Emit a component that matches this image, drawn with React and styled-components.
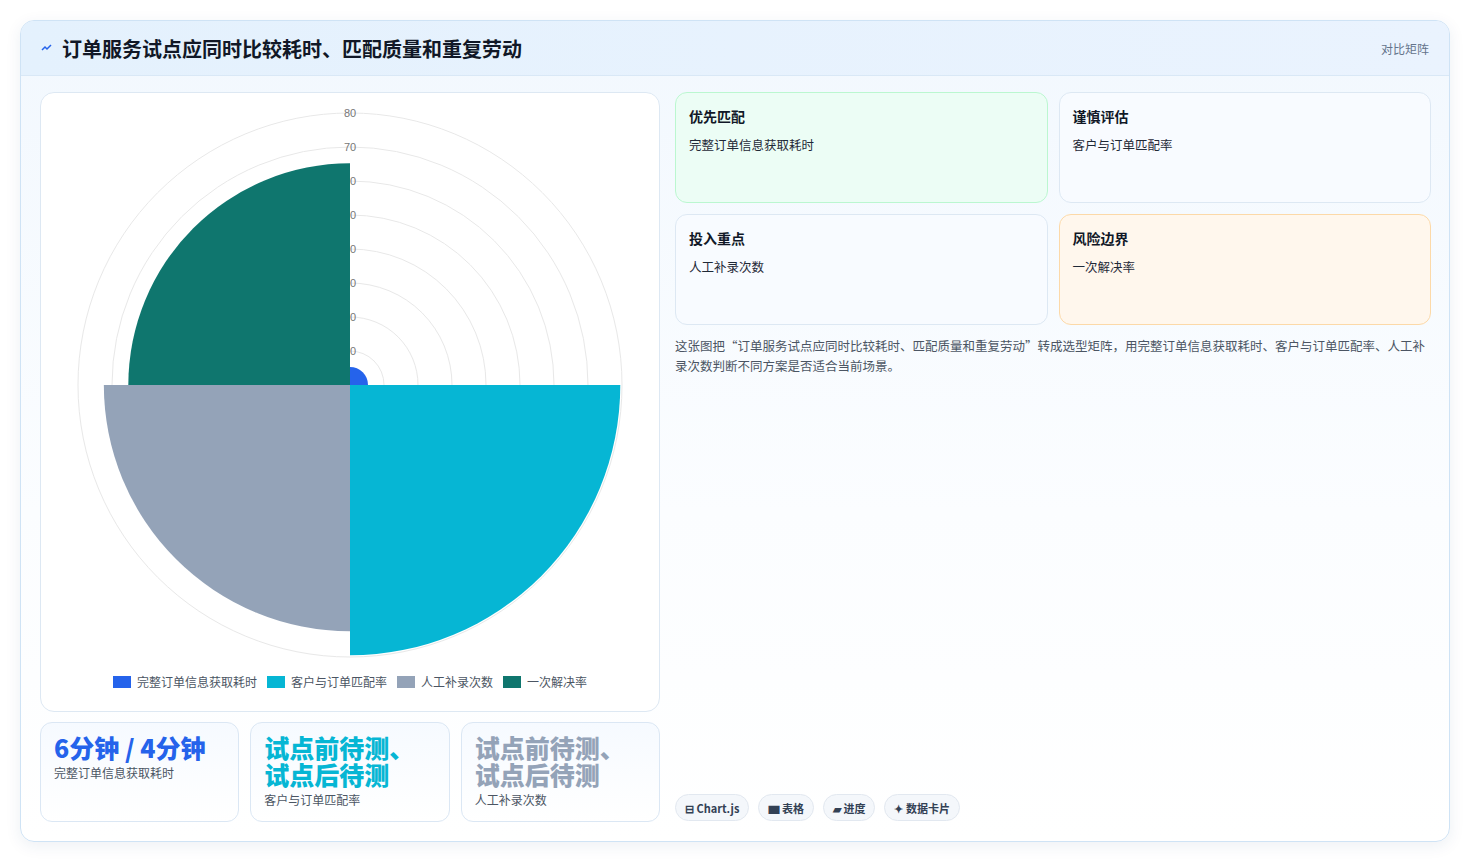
import React from "react";
import styled, { createGlobalStyle } from "styled-components";

const G = createGlobalStyle`
  body{margin:0;background:#fff;font-family:"Noto Sans CJK SC","Noto Sans",sans-serif;}
`;
const Page = styled.div`padding:20px 21px 22px 20px;height:862px;box-sizing:border-box;`;
const Frame = styled.div`
  height:820px;border:1px solid #cfe3f5;border-radius:14px;overflow:hidden;
  background:linear-gradient(180deg,#f2f8fe 0%,#fbfdff 60%,#fff 100%);
  box-shadow:0 4px 16px rgba(30,60,120,.08);display:flex;flex-direction:column;
`;
const Header = styled.div`
  height:55px;flex:none;box-sizing:border-box;display:flex;align-items:center;justify-content:space-between;
  padding:0 20px 0 20px;background:linear-gradient(90deg,#e4f1fd,#eaf3fe);border-bottom:1px solid #d9e8f6;
`;
const Title = styled.h1`margin:0;font-size:20px;font-weight:700;color:#111827;display:flex;align-items:center;gap:9px;`;
const Tag = styled.span`font-size:12px;color:#64748b;`;
const Body = styled.div`flex:1;display:grid;grid-template-columns:620px 1fr;gap:15px;padding:16px 18px 18px 19px;`;
const Left = styled.div`display:flex;flex-direction:column;gap:10px;`;
const ChartCard = styled.div`
  height:620px;box-sizing:border-box;border:1px solid #dde8f3;border-radius:14px;background:#fff;
  display:flex;flex-direction:column;align-items:center;
`;
const Legend = styled.div`display:flex;gap:10px;font-size:12px;color:#4b5563;margin-top:0;`;
const LItem = styled.span`display:flex;align-items:center;gap:6px;`;
const Sw = styled.i`width:18px;height:12px;background:${p=>p.c};display:inline-block;`;
const Stats = styled.div`display:grid;grid-template-columns:repeat(3,1fr);gap:11px;`;
const Stat = styled.div`
  height:100px;box-sizing:border-box;border:1px solid #dbe7f4;border-radius:12px;padding:11px 13px;
  background:linear-gradient(180deg,#f6faff,#fff);
`;
const Big = styled.div`font-size:25px;line-height:27px;font-weight:800;color:${p=>p.c};`;
const Small = styled.div`font-size:12px;color:#4b5563;margin-top:3px;`;
const Right = styled.div`display:flex;flex-direction:column;`;
const Grid = styled.div`display:grid;grid-template-columns:1fr 1fr;gap:11px 11px;`;
const Quad = styled.div`
  height:111px;box-sizing:border-box;border-radius:12px;padding:13px 13px;
  border:1px solid ${p=>p.b};background:${p=>p.bg};
`;
const QT = styled.div`font-size:14px;font-weight:700;color:#111827;`;
const QS = styled.div`font-size:12.5px;color:#1f2937;margin-top:9px;`;
const Desc = styled.p`margin:11px 0 0;font-size:12.5px;line-height:20px;color:#4b5563;`;
const Chips = styled.div`margin-top:auto;display:flex;gap:9px;margin-bottom:2px;`;
const Chip = styled.span`
  height:27px;box-sizing:border-box;padding:0 9px;border:1px solid #e2e8f0;border-radius:14px;background:#f4f7fb;
  font-size:11px;font-weight:700;color:#334155;display:flex;align-items:center;gap:3px;
`;

const cx=309, cy=292, k=3.4;
function arc(r,a0,a1){
  const p=(a)=>[cx+r*Math.cos(a),cy+r*Math.sin(a)];
  const [x0,y0]=p(a0),[x1,y1]=p(a1);
  return `M${cx} ${cy}L${x0} ${y0}A${r} ${r} 0 0 1 ${x1} ${y1}Z`;
}
const H=Math.PI/2;
function Chart(){
  return (
    <svg width="618" height="580" viewBox="0 0 618 580">
      {[1,2,3,4,5,6,7,8].map(i=><circle key={i} cx={cx} cy={cy} r={i*10*k} fill="none" stroke="#e8e8e8"/>)}
      {[1,2,3,4,5,6,7,8].map(i=><text key={i} x={cx} y={cy-i*10*k+4} textAnchor="middle" fontSize="11" fill="#777" fontFamily="Liberation Sans">{i*10}</text>)}
      <path d={arc(5.3*k,-H,0)} fill="#2563eb"/>
      <path d={arc(79.5*k,0,H)} fill="#06b6d4"/>
      <path d={arc(72.4*k,H,2*H)} fill="#94a3b8"/>
      <path d={arc(65.2*k,2*H,3*H)} fill="#0f766e"/>
    </svg>
  );
}

export default function App(){
  return (<Page><G/><Frame>
    <Header>
      <Title><svg width="12" height="8" viewBox="0 0 12 8"><path d="M1 6l3-3 2 2 4-4" stroke="#2563eb" strokeWidth="1.5" fill="none"/></svg>订单服务试点应同时比较耗时、匹配质量和重复劳动</Title>
      <Tag>对比矩阵</Tag>
    </Header>
    <Body>
      <Left>
        <ChartCard>
          <Chart/>
          <Legend>
            <LItem><Sw c="#2563eb"/>完整订单信息获取耗时</LItem>
            <LItem><Sw c="#06b6d4"/>客户与订单匹配率</LItem>
            <LItem><Sw c="#94a3b8"/>人工补录次数</LItem>
            <LItem><Sw c="#0f766e"/>一次解决率</LItem>
          </Legend>
        </ChartCard>
        <Stats>
          <Stat><Big c="#2563eb">6分钟 / 4分钟</Big><Small>完整订单信息获取耗时</Small></Stat>
          <Stat><Big c="#06b6d4">试点前待测、<br/>试点后待测</Big><Small>客户与订单匹配率</Small></Stat>
          <Stat><Big c="#94a3b8">试点前待测、<br/>试点后待测</Big><Small>人工补录次数</Small></Stat>
        </Stats>
      </Left>
      <Right>
        <Grid>
          <Quad b="#bbf7d0" bg="#ecfdf5"><QT>优先匹配</QT><QS>完整订单信息获取耗时</QS></Quad>
          <Quad b="#dde8f3" bg="#f8fbff"><QT>谨慎评估</QT><QS>客户与订单匹配率</QS></Quad>
          <Quad b="#dde8f3" bg="#f8fbff"><QT>投入重点</QT><QS>人工补录次数</QS></Quad>
          <Quad b="#fcd9a8" bg="#fff7ed"><QT>风险边界</QT><QS>一次解决率</QS></Quad>
        </Grid>
        <Desc>这张图把“订单服务试点应同时比较耗时、匹配质量和重复劳动”转成选型矩阵，用完整订单信息获取耗时、客户与订单匹配率、人工补录次数判断不同方案是否适合当前场景。</Desc>
        <Chips>
          <Chip>⊟ Chart.js</Chip><Chip>▆ 表格</Chip><Chip>▰ 进度</Chip><Chip>✦ 数据卡片</Chip>
        </Chips>
      </Right>
    </Body>
  </Frame></Page>);
}
